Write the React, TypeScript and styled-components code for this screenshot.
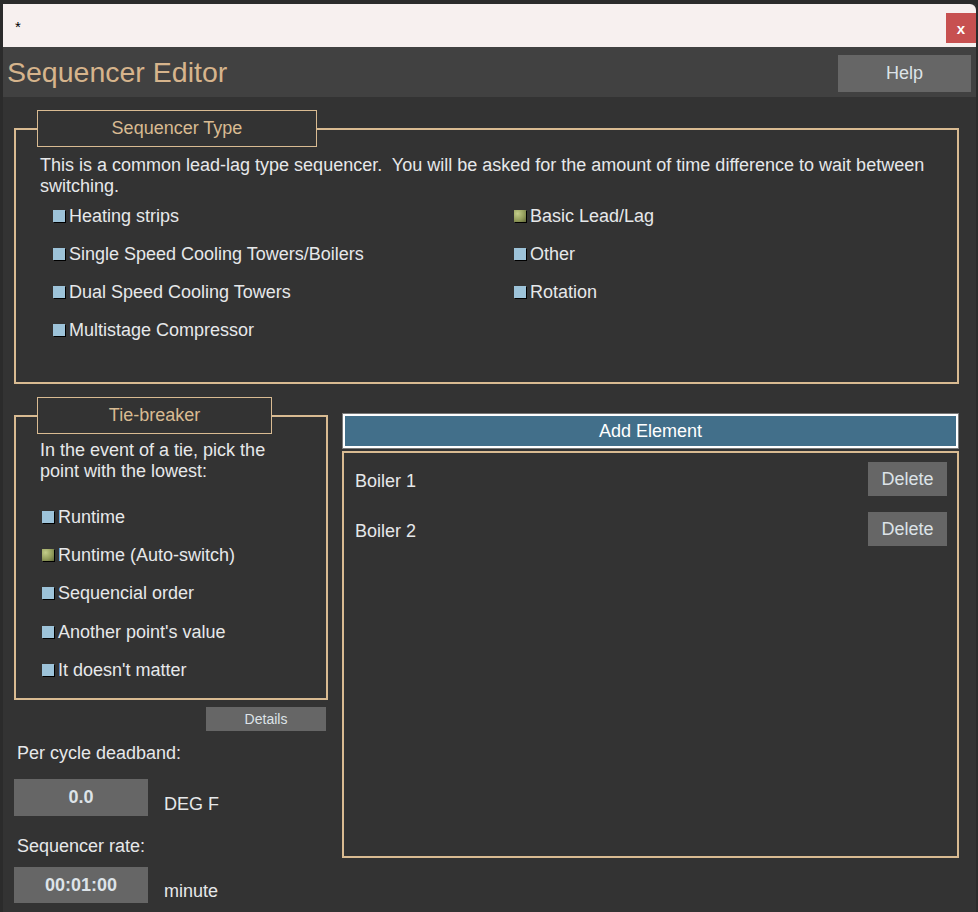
import React from "react";
import styled, { createGlobalStyle } from "styled-components";

const GlobalStyle = createGlobalStyle`
  html, body { margin: 0; padding: 0; }
  body {
    background: #2b2b2b;
    font-family: "Liberation Sans", Arial, sans-serif;
    overflow: hidden;
  }
`;

const TAN = "#d9bb92";
const TEXT = "#e6e8ea";

const Window = styled.div`
  margin: 4px 0 0 3px;
  width: 973px;
  height: 908px;
  display: flex;
  flex-direction: column;
  background: #333333;
`;

const TitleBar = styled.div`
  height: 43px;
  flex: none;
  background: #f7f0ef;
  border-top-right-radius: 6px;
  display: flex;
  align-items: flex-start;
  justify-content: space-between;
  box-sizing: border-box;
  padding: 0 0 0 12px;
`;

const Star = styled.span`
  margin-top: 14px;
  font-size: 15px;
  color: #000;
`;

const CloseBtn = styled.div`
  margin-top: 9px;
  width: 30px;
  height: 30px;
  background: #c75050;
  color: #fff;
  font-weight: bold;
  font-size: 15px;
  display: flex;
  align-items: center;
  justify-content: center;
  line-height: 1;
`;

const Header = styled.div`
  height: 50px;
  flex: none;
  background: #414141;
  display: flex;
  align-items: flex-start;
  justify-content: space-between;
  padding: 0 5px 0 4px;
`;

const Title = styled.h1`
  margin: 8px 0 0 0;
  font-size: 28.5px;
  font-weight: normal;
  color: #d6b48c;
  line-height: 34px;
`;

const HelpBtn = styled.div`
  margin-top: 8px;
  width: 133px;
  height: 37px;
  background: #666666;
  color: #dde3e8;
  font-size: 18px;
  display: flex;
  align-items: center;
  justify-content: center;
`;

const Body = styled.div`
  flex: 1;
  padding: 13px 17px 0 11px;
  display: flex;
  flex-direction: column;
`;

const Fieldset = styled.fieldset<{ $padBottom: number }>`
  margin: 0;
  padding: 0 0 ${(p) => p.$padBottom}px 0;
  border: 2px solid ${TAN};
  min-width: 0;
  color: ${TEXT};
`;

const Legend = styled.legend<{ $w: number }>`
  margin-left: 21px;
  padding: 0;
  width: ${(p) => p.$w}px;
  height: 37px;
  box-sizing: border-box;
  border: 1px solid ${TAN};
  background: #333333;
  color: ${TAN};
  font-size: 18px;
  display: flex;
  align-items: center;
  justify-content: center;
`;

const Desc = styled.p<{ $ml: number; $mt: number; $maxW?: number }>`
  margin: ${(p) => p.$mt}px 0 0 ${(p) => p.$ml}px;
  font-size: 18px;
  line-height: 21px;
  color: ${TEXT};
  max-width: ${(p) => (p.$maxW ? `${p.$maxW}px` : "none")};
`;

const TypeColumns = styled.div`
  display: grid;
  grid-template-columns: 461px 1fr;
  margin-left: 37px;
`;

const Column = styled.div`
  display: flex;
  flex-direction: column;
`;

const Option = styled.div<{ $h?: number }>`
  height: ${(p) => p.$h ?? 38}px;
  display: flex;
  align-items: center;
  font-size: 18px;
  color: ${TEXT};
`;

const Box = styled.span<{ $on?: boolean }>`
  width: 12px;
  height: 12px;
  flex: none;
  margin-right: 4px;
  margin-top: -1px;
  background: ${(p) =>
    p.$on
      ? "radial-gradient(circle at 30% 30%, #c3cd8a 0%, #949e5c 55%, #5f6638 100%)"
      : "#9dc3d9"};
  box-shadow: 1px 1px 0 #000;
`;

const LowerRow = styled.div`
  margin-top: 13px;
  display: grid;
  grid-template-columns: 314px 617px;
  column-gap: 14px;
  align-items: start;
`;

const LeftCol = styled.div`
  display: flex;
  flex-direction: column;
`;

const TieList = styled.div`
  margin: 16px 0 0 26px;
  display: flex;
  flex-direction: column;
`;

const DetailsBtn = styled.div`
  align-self: flex-end;
  margin: 7px 2px 0 0;
  width: 120px;
  height: 24px;
  background: #666666;
  color: #dde3e8;
  font-size: 14px;
  display: flex;
  align-items: center;
  justify-content: center;
`;

const FieldLabel = styled.div<{ $mt: number }>`
  margin: ${(p) => p.$mt}px 0 0 3px;
  font-size: 18px;
  line-height: 20px;
  color: ${TEXT};
`;

const InputRow = styled.div<{ $mt: number }>`
  margin-top: ${(p) => p.$mt}px;
  display: flex;
  align-items: flex-end;
  gap: 16px;
`;

const ValueBox = styled.div<{ $h: number }>`
  width: 134px;
  height: ${(p) => p.$h}px;
  background: #666666;
  color: #dde3e8;
  font-weight: bold;
  font-size: 18px;
  display: flex;
  align-items: center;
  justify-content: center;
`;

const Unit = styled.span`
  font-size: 18px;
  line-height: 20px;
  margin-bottom: 2px;
  color: ${TEXT};
`;

const RightCol = styled.div`
  margin-top: 16px;
  display: flex;
  flex-direction: column;
  gap: 2px;
`;

const AddBtn = styled.div`
  height: 36px;
  box-sizing: border-box;
  border: 1px solid #7a7a7a;
  display: flex;
`;

const AddInner = styled.div`
  flex: 1;
  border: 2px solid #ffffff;
  background: #426f8a;
  color: #ffffff;
  font-size: 18px;
  display: flex;
  align-items: center;
  justify-content: center;
`;

const Panel = styled.div`
  height: 407px;
  box-sizing: border-box;
  border: 2px solid ${TAN};
  padding: 9px 10px 0 11px;
  display: flex;
  flex-direction: column;
  gap: 16px;
`;

const ElementRow = styled.div`
  height: 34px;
  display: flex;
  align-items: center;
  justify-content: space-between;
  font-size: 18px;
  color: ${TEXT};
`;

const ElementName = styled.span`
  padding-top: 4px;
`;

const DeleteBtn = styled.div`
  width: 79px;
  height: 34px;
  background: #666666;
  color: #dde3e8;
  font-size: 18px;
  display: flex;
  align-items: center;
  justify-content: center;
`;

const typeLeft = [
  "Heating strips",
  "Single Speed Cooling Towers/Boilers",
  "Dual Speed Cooling Towers",
  "Multistage Compressor",
];
const typeRight = [
  { label: "Basic Lead/Lag", on: true },
  { label: "Other", on: false },
  { label: "Rotation", on: false },
];
const tieOptions = [
  { label: "Runtime", on: false, h: 39 },
  { label: "Runtime (Auto-switch)", on: true, h: 37 },
  { label: "Sequencial order", on: false, h: 39 },
  { label: "Another point's value", on: false, h: 38 },
  { label: "It doesn't matter", on: false, h: 38 },
];
const elements = ["Boiler 1", "Boiler 2"];

export default function App() {
  return (
    <>
      <GlobalStyle />
      <Window>
        <TitleBar>
          <Star>*</Star>
          <CloseBtn>x</CloseBtn>
        </TitleBar>
        <Header>
          <Title>Sequencer Editor</Title>
          <HelpBtn>Help</HelpBtn>
        </Header>
        <Body>
          <Fieldset $padBottom={33}>
            <Legend $w={280}>Sequencer Type</Legend>
            <Desc $ml={24} $mt={8}>
              This is a common lead-lag type sequencer.&nbsp; You will be asked for the amount of
              time difference to wait between switching.
            </Desc>
            <TypeColumns>
              <Column>
                {typeLeft.map((t) => (
                  <Option key={t}>
                    <Box />
                    {t}
                  </Option>
                ))}
              </Column>
              <Column>
                {typeRight.map((t) => (
                  <Option key={t.label}>
                    <Box $on={t.on} />
                    {t.label}
                  </Option>
                ))}
              </Column>
            </TypeColumns>
          </Fieldset>
          <LowerRow>
            <LeftCol>
              <Fieldset $padBottom={9}>
                <Legend $w={235}>Tie-breaker</Legend>
                <Desc $ml={24} $mt={6} $maxW={240}>
                  In the event of a tie, pick the point with the lowest:
                </Desc>
                <TieList>
                  {tieOptions.map((t) => (
                    <Option key={t.label} $h={t.h}>
                      <Box $on={t.on} />
                      {t.label}
                    </Option>
                  ))}
                </TieList>
              </Fieldset>
              <DetailsBtn>Details</DetailsBtn>
              <FieldLabel $mt={12}>Per cycle deadband:</FieldLabel>
              <InputRow $mt={16}>
                <ValueBox $h={37}>0.0</ValueBox>
                <Unit>DEG F</Unit>
              </InputRow>
              <FieldLabel $mt={20}>Sequencer rate:</FieldLabel>
              <InputRow $mt={11}>
                <ValueBox $h={36}>00:01:00</ValueBox>
                <Unit>minute</Unit>
              </InputRow>
            </LeftCol>
            <RightCol>
              <AddBtn>
                <AddInner>Add Element</AddInner>
              </AddBtn>
              <Panel>
                {elements.map((e) => (
                  <ElementRow key={e}>
                    <ElementName>{e}</ElementName>
                    <DeleteBtn>Delete</DeleteBtn>
                  </ElementRow>
                ))}
              </Panel>
            </RightCol>
          </LowerRow>
        </Body>
      </Window>
    </>
  );
}
